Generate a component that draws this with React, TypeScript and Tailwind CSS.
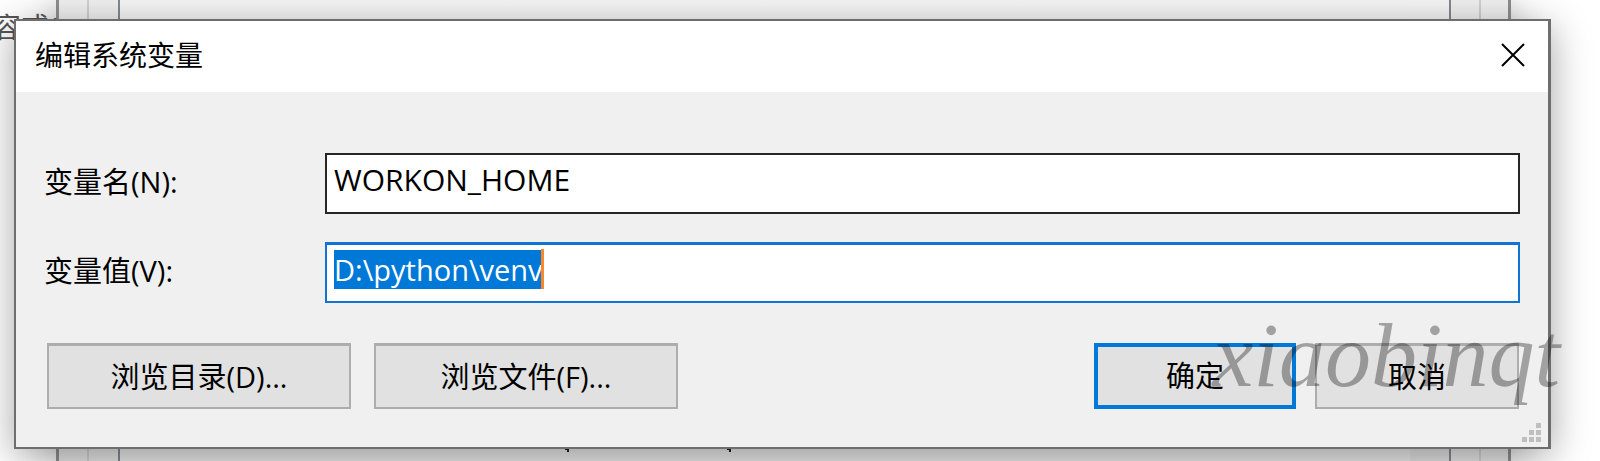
import { useEffect, useRef, useState } from "react";

const buttonBase =
  "h-[66px] bg-[#e1e1e1] text-[29px] leading-[40px] text-black outline-none flex items-center justify-center";

function BackdropWindow() {
  return (
    <div
      aria-hidden="true"
      className="absolute inset-y-0 left-[56px] right-[89px] flex border-x-3 border-[#8e8e8e] bg-linear-to-b from-[#f0f0f0] to-[#e6e6e6] shadow-[0_0_32px_rgba(0,0,0,0.2)]"
    >
      <div className="w-[30px] border-r-2 border-[#d0d0d0]" />
      <div className="w-[29px]" />
      <div className="relative flex flex-1 justify-end border-x-2 border-[#828790] bg-linear-to-b from-[#f6f6f6] to-[#eaeaea]">
        <div className="w-[39px] bg-linear-to-b from-[#f6f6f6] to-[#e2e2e2]" />
        <svg
          viewBox="0 0 170 4"
          className="absolute bottom-[9px] left-[445px] h-[4px] w-[170px] fill-[#1c1c2c]"
        >
          <path d="M0 0h4v4H2V2H0zM162 0h4v4h-2V2h-2z" />
        </svg>
      </div>
      <div className="w-[28px]" />
      <div className="w-[29px] border-l-2 border-[#d0d0d0]" />
    </div>
  );
}

function ResizeGrip() {
  return (
    <svg
      aria-hidden="true"
      viewBox="0 0 19 19"
      className="absolute right-[7px] bottom-[5px] h-[19px] w-[19px] fill-[#bfbfbf]"
    >
      <path d="M14 0h5v5h-5zM7 7h5v5H7zM14 7h5v5h-5zM0 14h5v5H0zM7 14h5v5H7zM14 14h5v5h-5z" />
    </svg>
  );
}

export default function App() {
  const [name, setName] = useState("WORKON_HOME");
  const [value, setValue] = useState("D:\\python\\venv");
  const valueRef = useRef<HTMLInputElement>(null);

  useEffect(() => {
    valueRef.current?.focus();
    valueRef.current?.select();
  }, []);

  return (
    <main className="relative min-h-screen overflow-hidden bg-white pt-[19px] pr-[49px] pb-[12px] pl-[14px] font-['Open_Sans','Noto_Sans_CJK_SC',sans-serif]">
      <BackdropWindow />
      <span
        aria-hidden="true"
        className="absolute top-[7px] left-[-7px] w-[64px] overflow-hidden text-[28px] leading-[40px] whitespace-nowrap text-[#555]"
      >
        容或(
      </span>

      <section
        role="dialog"
        aria-labelledby="title"
        className="relative border-2 border-r-3 border-[#6e6e6e] bg-[#f0f0f0] shadow-[0_8px_36px_rgba(0,0,0,0.36)]"
      >
        <header className="flex h-[71px] items-center justify-between bg-white pr-[23px] pb-[4px] pl-[19px]">
          <h1 id="title" className="text-[28px] leading-[40px] text-black">
            编辑系统变量
          </h1>
          <button type="button" aria-label="关闭">
            <svg viewBox="0 0 24 24" className="h-[24px] w-[24px] stroke-black stroke-2">
              <path d="M1 1L23 23M23 1L1 23" />
            </svg>
          </button>
        </header>

        <form className="pt-[61px] pr-[28px] pb-[38px] pl-[28px]" onSubmit={(e) => e.preventDefault()}>
          <div className="grid grid-cols-[281px_1fr] items-center gap-y-[28px]">
            <label htmlFor="var-name" className="pb-[4px] text-[29px] leading-[40px] text-black">
              变量名(N):
            </label>
            <input
              id="var-name"
              value={name}
              onChange={(e) => setName(e.target.value)}
              className="h-[61px] w-full border-2 border-[#262626] bg-white px-[7px] pb-[8px] text-[30px] leading-[40px] text-black outline-none"
            />
            <label htmlFor="var-value" className="pb-[4px] text-[29px] leading-[40px] text-black">
              变量值(V):
            </label>
            <div className="relative">
              <input
                id="var-value"
                ref={valueRef}
                value={value}
                onChange={(e) => setValue(e.target.value)}
                className="block h-[61px] w-full border-2 border-t-3 border-[#0f74d4] bg-white px-[7px] pb-[8px] text-[29px] leading-[40px] text-black outline-none selection:bg-[#0078d7] selection:text-white"
              />
              <span aria-hidden="true" className="absolute top-[7px] left-[216px] h-[40px] w-[3px] bg-[#ff8728]" />
            </div>
          </div>

          <div className="mt-[40px] flex pr-px pl-[3px]">
            <button type="button" className={`${buttonBase} w-[304px] border-2 border-t-3 border-[#adadad]`}>
              浏览目录(D)...
            </button>
            <button type="button" className={`${buttonBase} ml-[23px] w-[304px] border-2 border-t-3 border-[#adadad]`}>
              浏览文件(F)...
            </button>
            <button type="submit" className={`${buttonBase} ml-auto w-[202px] border-4 border-[#0078d7]`}>
              确定
            </button>
            <button type="button" className={`${buttonBase} ml-[19px] w-[204px] border-2 border-t-3 border-[#adadad]`}>
              取消
            </button>
          </div>
        </form>
        <ResizeGrip />
      </section>

      <span className="pointer-events-none absolute right-[40px] bottom-[60px] font-['Liberation_Serif',serif] text-[92px] leading-[92px] text-black/33 italic">
        xiaobinqt
      </span>
    </main>
  );
}
